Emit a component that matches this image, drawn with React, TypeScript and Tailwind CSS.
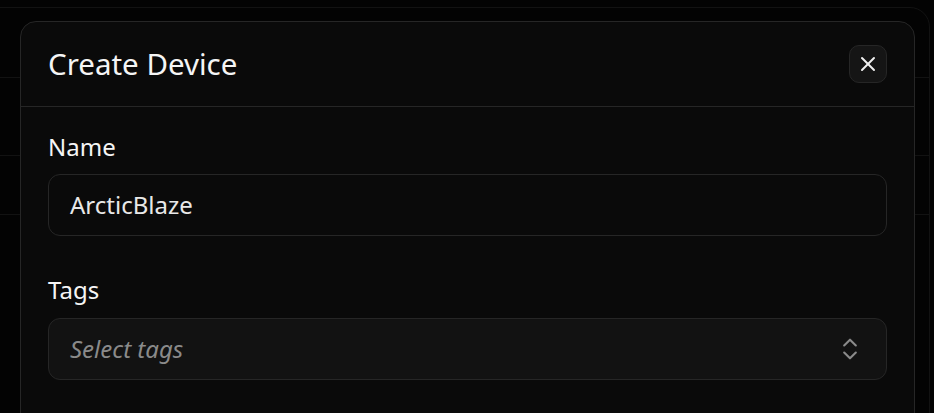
import React from "react";
import { X, ChevronsUpDown } from "lucide-react";

const font = { fontFamily: '"Noto Sans", "Open Sans", sans-serif' };

const BackgroundPage = () => {
  return (
    <div className="pt-[7px]">
      <div className="ml-[-20px] w-[950px] h-[500px] rounded-[20px] border border-[#121212]">
        <div className="h-[70px] border-b border-[#121212]"></div>
        <div className="h-[78px] border-b border-[#121212]"></div>
        <div className="h-[59px] border-b border-[#121212]"></div>
      </div>
    </div>
  );
};

const CreateDeviceDialog = () => {
  return (
    <div className="absolute left-[20px] top-[21px] w-[895px] h-[420px] rounded-[16px] border border-[#262626] bg-[#0a0a0a]">
      <div className="h-[85px] flex items-center justify-between px-[27px] border-b border-[#262626]">
        <h2 className="text-[29.5px] text-[#f5f5f5] leading-[40px]">Create Device</h2>
        <button className="w-[38px] h-[38px] rounded-[10px] border border-[#262626] bg-[#151515] flex items-center justify-center text-[#f0f0f0]">
          <X size={24} strokeWidth={2} />
        </button>
      </div>
      <div className="px-[27px] pt-[24px]">
        <label className="block text-[24px] leading-[32px] text-[#f5f5f5]">Name</label>
        <div className="mt-[11px] h-[62px] rounded-[12px] border border-[#262626] bg-[#0a0a0a] flex items-center px-[21px]">
          <span className="text-[24px] text-[#e8e8e8]">ArcticBlaze</span>
        </div>
        <label className="block mt-[38px] text-[24px] leading-[32px] text-[#f5f5f5]">Tags</label>
        <div className="mt-[12px] h-[62px] rounded-[12px] border border-[#262626] bg-[#121212] flex items-center justify-between px-[21px]">
          <span className="text-[24px] italic text-[#8a8a8a]">Select tags</span>
          <ChevronsUpDown size={28} strokeWidth={1.8} className="text-[#8a8a8a] mr-[1px]" />
        </div>
      </div>
    </div>
  );
};

export default function App() {
  return (
    <div className="relative w-[934px] h-[413px] overflow-hidden bg-[#030303]" style={font}>
      <BackgroundPage />
      <CreateDeviceDialog />
    </div>
  );
}
